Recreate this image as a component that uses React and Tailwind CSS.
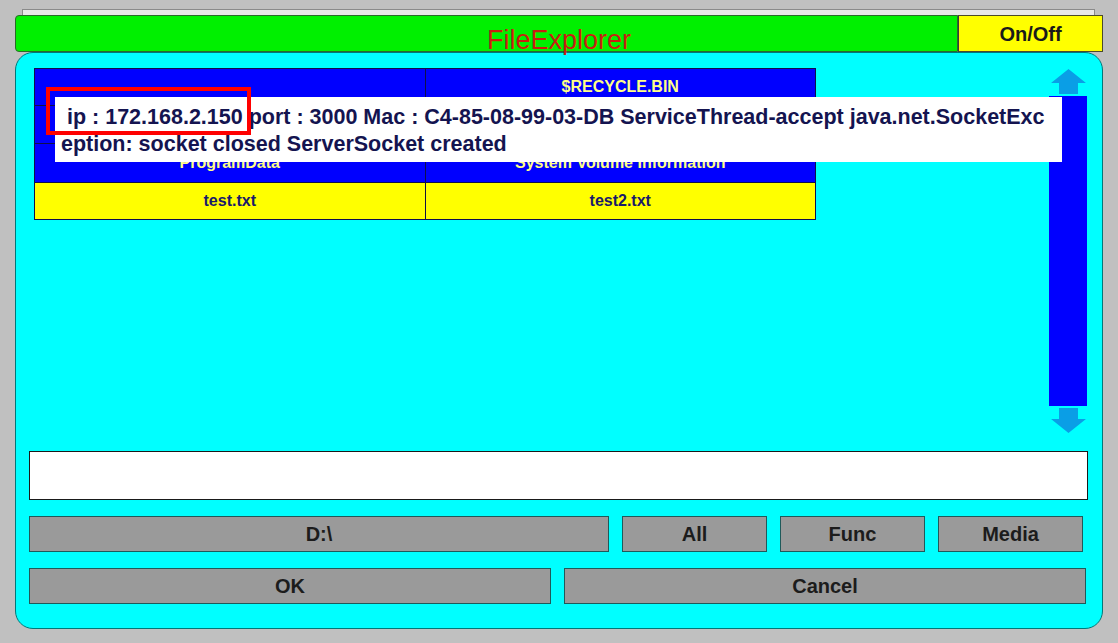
const rows = [
  { h: 'h-[37px]', tone: 'blue', cells: ['', '$RECYCLE.BIN'] },
  { h: 'h-[38px]', tone: 'blue', cells: ['Documents and Settings', 'Program Files'] },
  { h: 'h-[39px]', tone: 'blue', cells: ['ProgramData', 'System Volume Information'] },
  { h: 'h-[37px]', tone: 'yellow', cells: ['test.txt', 'test2.txt'] },
];

function Arrow({ down }) {
  return (
    <svg width="35" height="25" viewBox="0 0 35 25" className={down ? 'rotate-180' : ''}>
      <polygon points="17.5,0 35,14 27,14 27,25 8,25 8,14 0,14" fill="#0a9ee6" />
    </svg>
  );
}

function GrayButton({ label, w }) {
  return (
    <div className={`${w} h-[36px] bg-[#9a9a9a] border border-[#1f5a5a] flex items-center justify-center text-[20px] font-bold text-[#1c1c1c]`}>
      {label}
    </div>
  );
}

export default function App() {
  return (
    <div className="relative w-[1118px] h-[643px] overflow-hidden bg-[#c0c0c0] pt-[9px] font-['Liberation_Sans',Arial,sans-serif]">
      {/* window strip behind header */}
      <div className="ml-[22px] w-[1073px] h-[6px] bg-[#e8e8e8] border-t border-l border-r border-[#8a8a8a]" />

      {/* header */}
      <div className="ml-[15px] w-[1088px] h-[37px] flex">
        <div className="flex-1 bg-[#00f000] border border-[#2a6a2a] rounded-tl-[4px] rounded-bl-[4px] pl-[145px] pt-[11px] flex justify-center">
          <span className="text-[27px] leading-[26px] text-[#c81e10]">FileExplorer</span>
        </div>
        <div className="w-[145px] bg-[#ffff00] border border-[#4a4a2a] border-l-[#3a3a3a] flex items-center justify-center text-[20px] font-bold text-[#1a1a1a]">
          On/Off
        </div>
      </div>

      {/* main panel */}
      <div className="ml-[15px] w-[1088px] h-[577px] bg-[#00ffff] border border-[#007878] rounded-[18px] pt-[15px] pl-[13px] pr-[14px]">
        <div className="flex justify-between h-[365px]">
          <div className="ml-[5px] w-[782px] self-start grid grid-cols-2 border-t border-l border-[#10104a]">
            {rows.map((row, i) =>
              row.cells.map((c, j) => (
                <div
                  key={`${i}-${j}`}
                  className={`${row.h} border-r border-b border-[#10104a] flex items-center justify-center text-[16px] font-bold ${
                    row.tone === 'blue' ? 'bg-[#0000ff] text-[#ffff88]' : 'bg-[#ffff00] text-[#1a1a6a]'
                  }`}
                >
                  {c}
                </div>
              ))
            )}
          </div>
          <div className="w-[38px] mr-[1px] mt-[1px] flex flex-col items-center gap-[2px]">
            <Arrow />
            <div className="w-[38px] h-[311px] bg-[#0000ff]" />
            <Arrow down />
          </div>
        </div>

        <div className="mt-[18px] w-[1059px] h-[49px] bg-white border border-[#1a1a1a]" />

        <div className="mt-[16px] flex gap-[13px]">
          <GrayButton label="D:\" w="w-[580px]" />
          <GrayButton label="All" w="w-[145px]" />
          <GrayButton label="Func" w="w-[145px]" />
          <GrayButton label="Media" w="w-[145px]" />
        </div>
        <div className="mt-[16px] flex gap-[13px]">
          <GrayButton label="OK" w="w-[522px]" />
          <GrayButton label="Cancel" w="w-[522px]" />
        </div>
      </div>

      {/* toast message */}
      <div className="absolute left-[55px] top-[97px] w-[1007px] h-[65px] bg-white pl-[6px] pt-[7px] text-[21.5px] leading-[27px] font-bold text-[#141450] whitespace-nowrap">
        <div>&nbsp;ip : 172.168.2.150 port : 3000 Mac : C4-85-08-99-03-DB ServiceThread-accept java.net.SocketExc</div>
        <div>eption: socket closed ServerSocket created</div>
      </div>
      {/* highlight box */}
      <div className="absolute left-[46px] top-[87px] w-[205px] h-[48px] border-[4px] border-[#ff0000]" />
    </div>
  );
}
